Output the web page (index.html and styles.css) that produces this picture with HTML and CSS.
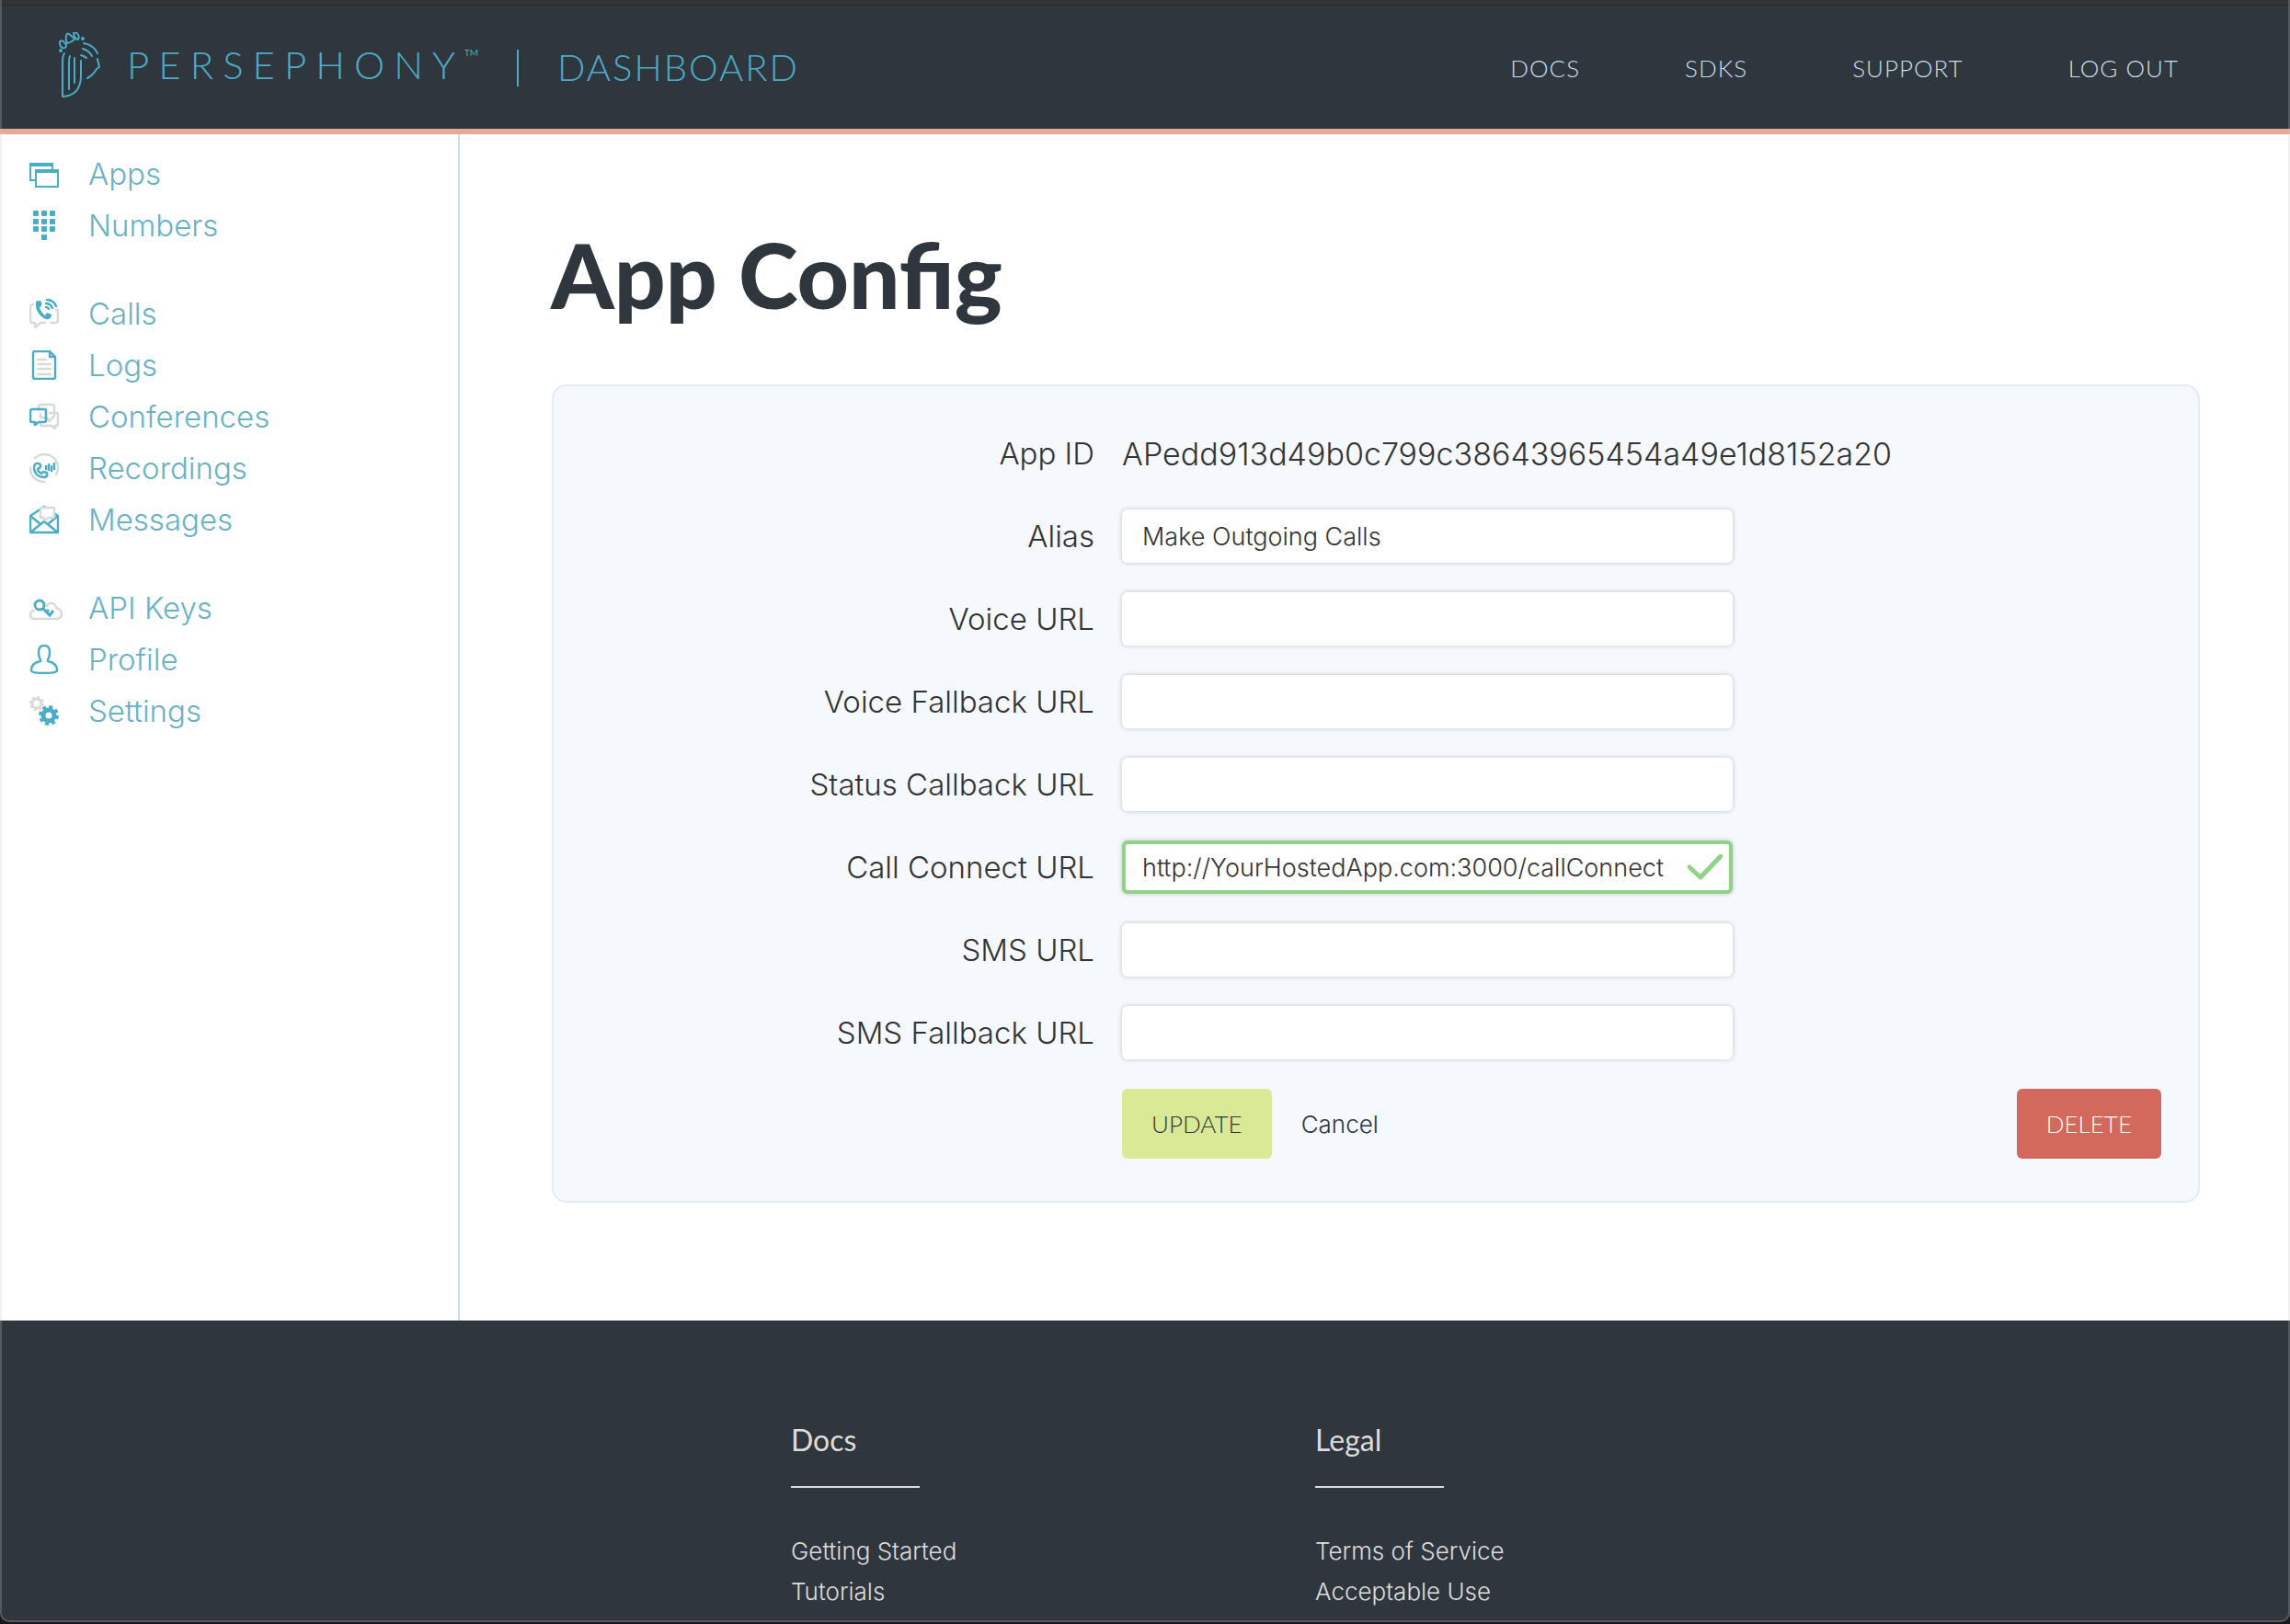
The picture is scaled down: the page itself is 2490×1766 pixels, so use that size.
FILE: index.html
```html
<!DOCTYPE html>
<html lang="en">
<head>
<meta charset="utf-8">
<meta name="viewport" content="width=device-width, initial-scale=1">
<title>App Config - Persephony Dashboard</title>
<link rel="stylesheet" href="styles.css">
</head>
<body>
<header class="header">
  <a class="brand" href="#">
    <svg class="brand-mark" viewBox="0 0 46 72" aria-hidden="true">
      <g fill="none" stroke="currentColor" stroke-width="2" stroke-linecap="round" stroke-linejoin="round">
        <path d="M6 23Q4 26 4 32V70Q23 69 24 49V31M12 26Q11 28 11 33V62M17 28V55"/>
        <path d="M27 12Q38 14 42 23M26 18Q33 20 36 26M24 25Q28 26 30 28M42 29L44 38L41 40Q37 47 31 50"/>
        <path d="M8 14L5 10Q1 8 1 11Q1 16 4 17Q8 18 8 14ZM8 10Q7 0 11 2L17 7Q16 10 9 12ZM16 1Q20-1 22 5L21 8Q17 8 16 1Z"/>
      </g>
      <g fill="currentColor"><circle cx="2" cy="20" r="2"/><circle cx="26" cy="7" r="2"/></g>
    </svg>
    <span class="brand-name">PERSEPHONY</span><span class="brand-tm">TM</span>
    <span class="brand-rule"></span>
    <span class="brand-section">DASHBOARD</span>
  </a>
  <nav class="nav" aria-label="Account">
    <a href="#">DOCS</a>
    <a href="#">SDKS</a>
    <a href="#">SUPPORT</a>
    <a href="#">LOG OUT</a>
  </nav>
</header>

<div class="layout">
  <nav class="sidebar" aria-label="Dashboard">
    <ul class="menu">
      <li><a href="#"><svg viewBox="0 0 36 32"><g fill="none" stroke="currentColor" stroke-width="2"><path d="M7 23H1V5H25V11"/><rect x="7" y="12" width="24" height="18"/></g><path fill="currentColor" d="M0 4H26V8H0ZM6 11H32V15H6Z"/></svg>Apps</a></li>
      <li><a href="#"><svg viewBox="0 0 36 32"><g fill="currentColor"><rect x="4" y="0" width="6" height="6" rx="1"/><rect x="13" y="0" width="6" height="6" rx="1"/><rect x="22" y="0" width="6" height="6" rx="1"/><rect x="4" y="9" width="6" height="6" rx="1"/><rect x="13" y="9" width="6" height="6" rx="1"/><rect x="22" y="9" width="6" height="6" rx="1"/><rect x="4" y="17" width="6" height="6" rx="1"/><rect x="13" y="17" width="6" height="6" rx="1"/><rect x="22" y="17" width="6" height="6" rx="1"/><rect x="13" y="26" width="6" height="6" rx="1"/></g></svg>Numbers</a></li>
    </ul>
    <ul class="menu">
      <li><a href="#"><svg viewBox="0 0 36 32"><path class="soft" d="M4 6Q1 6 1 9V23Q1 26 4 26H6V31L12 26H17M29 12H31V23Q31 26 28 26H24"/><path fill="currentColor" d="M7 3Q9 1 13 3L13 8L11 9Q12 14 17 18L19 15L24 17Q24 21 21 22Q16 23 11 17Q6 11 7 3Z"/><path fill="none" stroke="currentColor" stroke-width="2.4" stroke-linecap="round" d="M19 1Q26 1 29 8M18 5Q23 5 25 10M18 9Q20 9 21 11"/></svg>Calls</a></li>
      <li><a href="#"><svg viewBox="0 0 36 32"><path fill="none" stroke="currentColor" stroke-width="2.4" stroke-linejoin="round" d="M6 1H22L28 7V29Q28 31 26 31H6Q4 31 4 29V3Q4 1 6 1ZM22 1V7H28"/><path class="soft" d="M9 10H18M9 15H23M9 20H23M9 26H23"/></svg>Logs</a></li>
      <li><a href="#"><svg viewBox="0 0 36 32"><path class="soft" d="M10 9V5Q10 3 12 3H25Q27 3 27 5V15Q27 17 25 17L22 21L19 17H12V13M22 12H29Q31 12 31 14V24Q31 26 29 26H28V29L24 26H14Q12 26 12 24"/><path fill="none" stroke="currentColor" stroke-width="2.6" stroke-linejoin="round" d="M3 8H16Q18 8 18 10V20Q18 22 16 22H10L6 25V22H3Q1 22 1 20V10Q1 8 3 8Z"/></svg>Conferences</a></li>
      <li><a href="#"><svg viewBox="0 0 36 32"><path class="soft" d="M6 5Q13-1 22 2Q31 6 31 16Q31 20 29 23M1 16Q1 24 7 28Q11 31 16 31"/><path fill="none" stroke="currentColor" stroke-width="2.4" stroke-linejoin="round" d="M10 11Q5 10 5 16Q6 26 17 26Q20 25 19 21L15 20L13 22Q9 20 9 17L12 15Q12 11 10 11ZM18 13V18M21 11V19M24 13V20M27 10V18"/></svg>Recordings</a></li>
      <li><a href="#"><svg viewBox="0 0 36 32"><path fill="none" stroke="currentColor" stroke-width="2.4" stroke-linejoin="round" d="M1 12L16 2L31 12V30H1ZM1 12L12 21M31 12L20 21M1 30L16 18L31 30"/><path class="soft soft-filled" d="M14 3H26Q27 3 27 4V13Q27 14 26 14H20L17 17L15 14H13Q12 14 12 13V4Q12 3 14 3Z"/></svg>Messages</a></li>
    </ul>
    <ul class="menu">
      <li><a href="#"><svg viewBox="0 0 36 32"><path class="soft" d="M5 19Q1 20 1 24Q1 28 6 28H29Q35 28 35 22Q34 17 29 16Q28 11 24 11Q20 11 19 14"/><g fill="none" stroke="currentColor" stroke-width="3"><circle cx="11" cy="13" r="5"/><path d="M15 17L22 24L26 19M18 21L21 18"/></g></svg>API Keys</a></li>
      <li><a href="#"><svg viewBox="0 0 36 32"><path fill="none" stroke="currentColor" stroke-width="2.4" stroke-linejoin="round" d="M16 1Q10 1 10 8Q10 14 12 16V18Q2 20 2 28Q2 31 16 31Q30 31 30 28Q30 20 20 18V16Q22 14 22 8Q22 1 16 1Z"/></svg>Profile</a></li>
      <li><a href="#"><svg viewBox="0 0 36 32"><g fill="none"><circle cx="8" cy="8" r="5" stroke="#d9d9d6" stroke-width="3"/><circle cx="8" cy="8" r="7" stroke="#d9d9d6" stroke-width="2" stroke-dasharray="3 2.5"/><circle cx="21" cy="21" r="6" stroke="currentColor" stroke-width="5"/><circle cx="21" cy="21" r="9.5" stroke="currentColor" stroke-width="3" stroke-dasharray="4 3.46"/></g></svg>Settings</a></li>
    </ul>
  </nav>

  <main class="main">
    <h1 class="title">App Config</h1>
    <form class="panel">
      <div class="row"><span class="label">App ID</span><output class="app-id">APedd913d49b0c799c38643965454a49e1d8152a20</output></div>
      <div class="row"><label class="label" for="alias">Alias</label><input class="field" id="alias" type="text" value="Make Outgoing Calls"></div>
      <div class="row"><label class="label" for="voice">Voice URL</label><input class="field" id="voice" type="text"></div>
      <div class="row"><label class="label" for="voice-fallback">Voice Fallback URL</label><input class="field" id="voice-fallback" type="text"></div>
      <div class="row"><label class="label" for="status">Status Callback URL</label><input class="field" id="status" type="text"></div>
      <div class="row"><label class="label" for="connect">Call Connect URL</label>
        <div class="field-wrap">
          <input class="field field-valid" id="connect" type="text" value="http://YourHostedApp.com:3000/callConnect">
          <svg class="check" viewBox="0 0 38 28" aria-hidden="true"><path d="M2 14L14 25L36 2"/></svg>
        </div>
      </div>
      <div class="row"><label class="label" for="sms">SMS URL</label><input class="field" id="sms" type="text"></div>
      <div class="row"><label class="label" for="sms-fallback">SMS Fallback URL</label><input class="field" id="sms-fallback" type="text"></div>
      <div class="row">
        <div class="actions">
          <button class="button button-update" type="submit">UPDATE</button>
          <a class="cancel" href="#">Cancel</a>
          <button class="button button-delete" type="button">DELETE</button>
        </div>
      </div>
    </form>
  </main>
</div>

<footer class="footer">
  <section class="footer-group">
    <h2>Docs</h2>
    <ul>
      <li><a href="#">Getting Started</a></li>
      <li><a href="#">Tutorials</a></li>
    </ul>
  </section>
  <section class="footer-group">
    <h2>Legal</h2>
    <ul>
      <li><a href="#">Terms of Service</a></li>
      <li><a href="#">Acceptable Use</a></li>
    </ul>
  </section>
</footer>
</body>
</html>
```
FILE: styles.css
```css
* { box-sizing: border-box; }

html { height: 100%; }

body {
  margin: 0;
  min-height: 100%;
  display: flex;
  flex-direction: column;
  background: #2f363d;
  color: #333;
  font-family: Inter, "Liberation Sans", sans-serif;
  font-weight: 300;
  font-size: 33px;
}

/* thin window frame over the page */
body::after {
  content: "";
  position: fixed;
  inset: 0 0 2px;
  border: 2px solid rgba(200, 200, 200, 0.25);
  border-top: 0;
  border-radius: 0 0 10px 10px;
  box-shadow: 0 0 0 10px #14161c;
  pointer-events: none;
}

a { color: inherit; text-decoration: none; }
ul { list-style: none; margin: 0; padding: 0; }

.header {
  display: flex;
  align-items: center;
  justify-content: space-between;
  height: 146px;
  padding: 0 121px 0 64px;
  background: #2f363d;
  border-top: 5px solid #323436;
  border-bottom: 6px solid #e5a998;
  box-shadow: inset 0 1px 0 #292a2a;
}

.brand {
  display: flex;
  align-items: center;
  padding-bottom: 4px;
  color: #4bacc6;
  font-family: Lato, sans-serif;
}
.brand-mark { width: 46px; height: 72px; margin-right: 28px; }
.brand-name { font-size: 42px; line-height: 50px; padding-bottom: 2px; letter-spacing: 10px; }
.brand-tm { align-self: flex-start; margin-top: 16px; font-size: 10px; line-height: 12px; font-weight: 400; }
.brand-rule { width: 2px; height: 40px; margin: 6px 42px 0; background: #4bacc6; }
.brand-section { padding-top: 4px; font-size: 40px; line-height: 50px; letter-spacing: 2px; }

.nav {
  display: flex;
  gap: 114px;
  padding-top: 2px;
  color: #c5deef;
  font-family: Lato, sans-serif;
  font-size: 26px;
  letter-spacing: 1px;
}

.layout { display: flex; background: #fff; }

.sidebar {
  flex: 0 0 500px;
  padding-top: 15px;
  border-right: 2px solid #c5deef;
  color: #69b2c6;
}
.menu { margin-bottom: 40px; }
.menu a {
  display: flex;
  align-items: center;
  height: 56px;
  padding-left: 32px;
  gap: 28px;
}
.menu svg { width: 36px; height: 32px; color: #4bacc6; }
.soft {
  fill: none;
  stroke: #d9d9d6;
  stroke-width: 2.4px;
  stroke-linecap: round;
  stroke-linejoin: round;
}
.soft-filled { fill: #fff; }

.main { flex: 1; min-width: 0; padding: 92px 98px 128px 99px; }

.title {
  margin: 0 0 60px;
  color: #2f363d;
  font-family: Lato, sans-serif;
  font-size: 98px;
  font-weight: 900;
  line-height: 120px;
}

.panel {
  display: grid;
  gap: 32px;
  margin-left: 1px;
  padding: 44px 40px 46px;
  background: #f5f8fd;
  border: 2px solid #e1ecf4;
  border-radius: 16px;
}
.row {
  display: grid;
  grid-template-columns: 548fr 1130fr;
  column-gap: 30px;
  align-items: center;
  min-height: 58px;
}
.label { text-align: right; }
.app-id { font-size: 34px; }

.field {
  width: 100%;
  max-width: 664px;
  height: 58px;
  padding: 0 22px;
  border: 0;
  border-radius: 6px;
  background: #fff;
  box-shadow: 0 0 4px 1px rgba(0, 0, 0, 0.15);
  color: #333;
  font: inherit;
  font-size: 27px;
}
.field-wrap { position: relative; max-width: 664px; }
.field-valid { display: block; padding: 0 60px 0 18px; border: 4px solid #90d286; }
.check { position: absolute; right: 11px; top: 15px; width: 38px; height: 28px; }
.check path { fill: none; stroke: #90d286; stroke-width: 5; stroke-linecap: round; stroke-linejoin: round; }

.actions { grid-column: 2; display: flex; align-items: center; gap: 32px; font-size: 26px; }
.button {
  height: 76px;
  padding: 0 32px;
  border: 0;
  border-radius: 6px;
  font-family: Lato, sans-serif;
  font-size: 26px;
  font-weight: 300;
}
.button-update { background: #dae996; color: #2f363d; }
.button-delete { margin-left: auto; background: #d3685c; color: #fff; }
.cancel { color: #2f363d; }

.footer {
  flex: 1;
  display: grid;
  grid-template-columns: 86fr 57fr 106fr;
  padding-top: 110px;
  background: #2f363d;
  color: #ddd;
}
.footer-group:first-child { grid-column: 2; }
.footer h2 {
  margin: 0 0 47px;
  font-family: Lato, sans-serif;
  font-size: 32px;
  font-weight: 400;
  line-height: 40px;
}
.footer h2::after {
  content: "";
  display: block;
  width: 140px;
  height: 2px;
  margin-top: 30px;
  background: #ddd;
}
.footer li { font-size: 26px; line-height: 44px; }
```
